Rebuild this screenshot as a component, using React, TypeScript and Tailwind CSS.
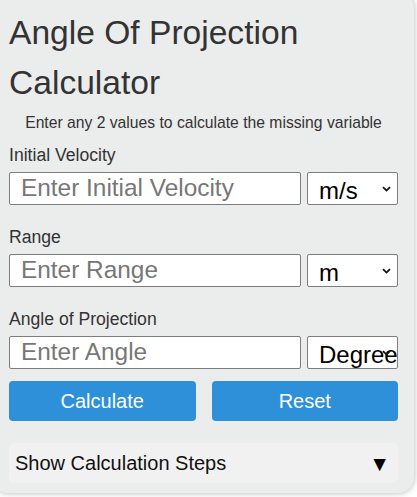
import React from 'react';

const Chevron: React.FC = () => (
  <svg
    className="pointer-events-none absolute right-[7px] top-1/2 -translate-y-1/2"
    width="9"
    height="6"
    viewBox="0 0 9 6"
    fill="none"
  >
    <path d="M1 1.2 L4.5 4.6 L8 1.2" stroke="#111" strokeWidth="1.8" />
  </svg>
);

const Field: React.FC<{ label: string; placeholder: string; unit: string; }> = ({ label, placeholder, unit }) => (
  <div className="flex flex-col">
    <label className="text-[17.6px] leading-[1.2] text-[#333] mb-[5.5px]">{label}</label>
    <div className="flex gap-[6px]">
      <input
        type="text"
        placeholder={placeholder}
        className="flex-1 min-w-0 h-[33px] bg-white border border-[#7d7d7d] rounded-[2px] px-[11px] text-[24.4px] text-[#111] placeholder:text-[#777] outline-none"
      />
      <div className="relative w-[91px] h-[33px] shrink-0">
        <select
          defaultValue={unit}
          className="appearance-none w-full h-full bg-white border border-[#7d7d7d] rounded-[2px] pl-[11px] pr-0 text-[24px] text-black outline-none"
        >
          <option>{unit}</option>
        </select>
        <Chevron />
      </div>
    </div>
  </div>
);

export default function App() {
  return (
    <div className="min-h-screen bg-white overflow-hidden font-['Liberation_Sans',Arial,sans-serif]">
      <div className="-mt-2 -ml-2 w-[422px] bg-[#ebecec] rounded-[16px] shadow-[0_0_6px_rgba(0,0,0,0.3)] pt-4 pb-[10px] pl-[17px] pr-[16px]">
        <h1 className="text-[33.6px] leading-[50px] font-normal text-[#333]">
          Angle Of Projection Calculator
        </h1>
        <p className="mt-[5.6px] text-center text-[15.7px] leading-[1.2] text-[#333]">
          Enter any 2 values to calculate the missing variable
        </p>

        <div className="mt-[13px] flex flex-col gap-[22.4px]">
          <Field label="Initial Velocity" placeholder="Enter Initial Velocity" unit="m/s" />
          <Field label="Range" placeholder="Enter Range" unit="m" />
          <Field label="Angle of Projection" placeholder="Enter Angle" unit="Degrees" />
        </div>

        <div className="mt-3 grid grid-cols-2 gap-4">
          <button className="h-10 rounded-[4px] bg-[#2e90d8] text-white text-[20px]">Calculate</button>
          <button className="h-10 rounded-[4px] bg-[#2e90d8] text-white text-[20px]">Reset</button>
        </div>

        <div className="mt-[22px] h-10 rounded-[5px] bg-[#f1f1f1] flex items-center justify-between pl-[6px] pr-[8px] text-[20px] text-[#111]">
          <span>Show Calculation Steps</span>
          <span className="text-[21px] leading-none text-black">▼</span>
        </div>
      </div>
    </div>
  );
}
